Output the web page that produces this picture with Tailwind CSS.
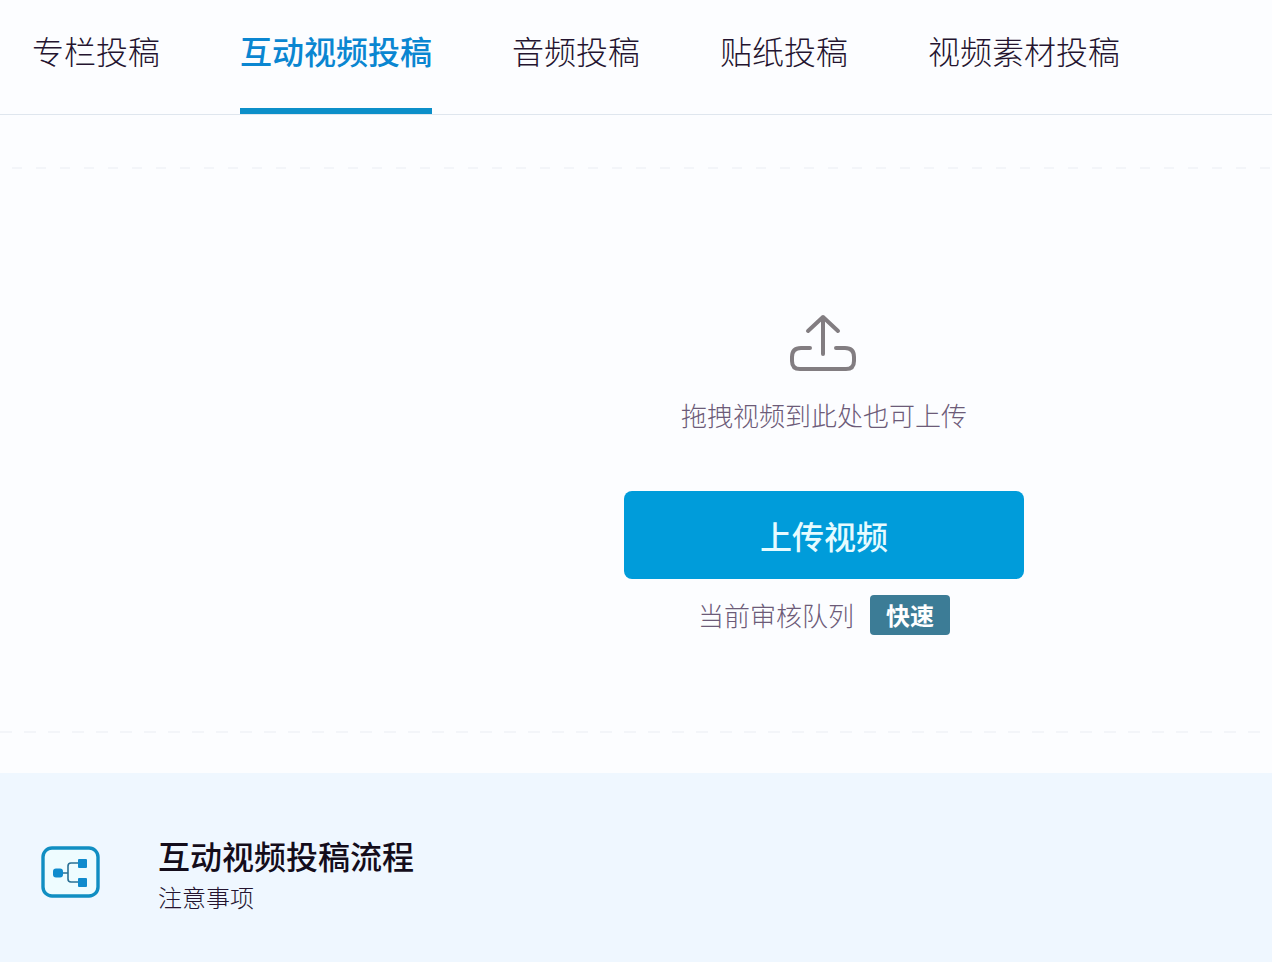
<!DOCTYPE html>
<html lang="zh-CN">
<head>
  <meta charset="UTF-8" />
  <meta name="viewport" content="width=device-width, initial-scale=1.0"/>
  <title>互动视频投稿</title>
  <script src="https://cdn.jsdelivr.net/npm/@tailwindcss/browser@4"></script>
</head>

<body class="bg-[#fcfdff] min-h-screen flex flex-col font-['Noto_Sans_CJK_SC',sans-serif]">

  <!-- Tabs -->
  <nav class="border-b border-[#dfe6ee]">
    <div class="flex gap-20 px-8 pt-6.5 text-[32px] leading-12 font-light text-[#24142f] whitespace-nowrap">
      <a href="#" class="pb-8.5 border-b-6 border-transparent">专栏投稿</a>
      <a href="#" class="pb-8.5 border-b-6 border-[#0c8fc9] text-[#0a86d1] font-medium">互动视频投稿</a>
      <a href="#" class="pb-8.5 border-b-6 border-transparent">音频投稿</a>
      <a href="#" class="pb-8.5 border-b-6 border-transparent">贴纸投稿</a>
      <a href="#" class="pb-8.5 border-b-6 border-transparent">视频素材投稿</a>
    </div>
  </nav>

  <!-- Upload area -->
  <main class="mt-13 mb-10">
    <div class="h-0.5 ml-3 bg-[repeating-linear-gradient(90deg,#f3f5f9_0_10px,transparent_10px_24px)]"></div>

    <div class="flex flex-col items-center pl-[376px] pt-36 pb-24 font-light">
      <svg class="w-18 h-16" viewBox="0 0 72 64" fill="none" stroke="#827d81" stroke-width="4" stroke-linecap="round" stroke-linejoin="round">
        <path d="M35 41V4M20 18L35 4L50 18"/>
        <path d="M22 35H13Q4 35 4 44V48Q4 56 12 56H58Q66 56 66 48V44Q66 35 57 35H48"/>
      </svg>
      <p class="mt-4.5 text-[26px] leading-10 text-[#6c5b78]">拖拽视频到此处也可上传</p>
      <button type="button" class="mt-14 w-100 h-22 rounded-lg bg-[#009cda] text-[#e6fbff] text-[32px] font-medium cursor-pointer">上传视频</button>
      <div class="mt-4 flex items-center gap-4">
        <span class="text-[26px] leading-10 text-[#6c5b78]">当前审核队列</span>
        <span class="px-4 rounded bg-[#3c7c96] text-white text-2xl leading-10 font-bold">快速</span>
      </div>
    </div>

    <div class="h-0.5 bg-[repeating-linear-gradient(90deg,#f3f5f9_0_12px,transparent_12px_24px)]"></div>
  </main>

  <!-- Process notes -->
  <section class="grow flex items-start gap-14.5 px-10 pt-14.5 bg-[#eff7ff]">
    <svg class="mt-3 w-15 h-14 shrink-0" viewBox="0 0 60 56" fill="none">
      <rect x="3" y="5" width="55" height="48" rx="9" fill="#eefcff" stroke="#118ec2" stroke-width="3.4"/>
      <path d="M20 30H28M40 20H31Q28 20 28 23V36Q28 39 31 39H40" stroke="#2a7095" stroke-width="1.6"/>
      <rect x="13" y="25.5" width="10" height="9" rx="3" fill="#108bcd"/>
      <rect x="38" y="16" width="9" height="9" rx="1" fill="#108bcd"/>
      <rect x="38" y="35" width="9" height="9" rx="1" fill="#108bcd"/>
    </svg>
    <div>
      <h2 class="text-[32px] leading-12 font-medium text-[#140d1b]">互动视频投稿流程</h2>
      <p class="text-2xl leading-9 font-light text-[#24142f]">注意事项</p>
    </div>
  </section>

</body>
</html>
